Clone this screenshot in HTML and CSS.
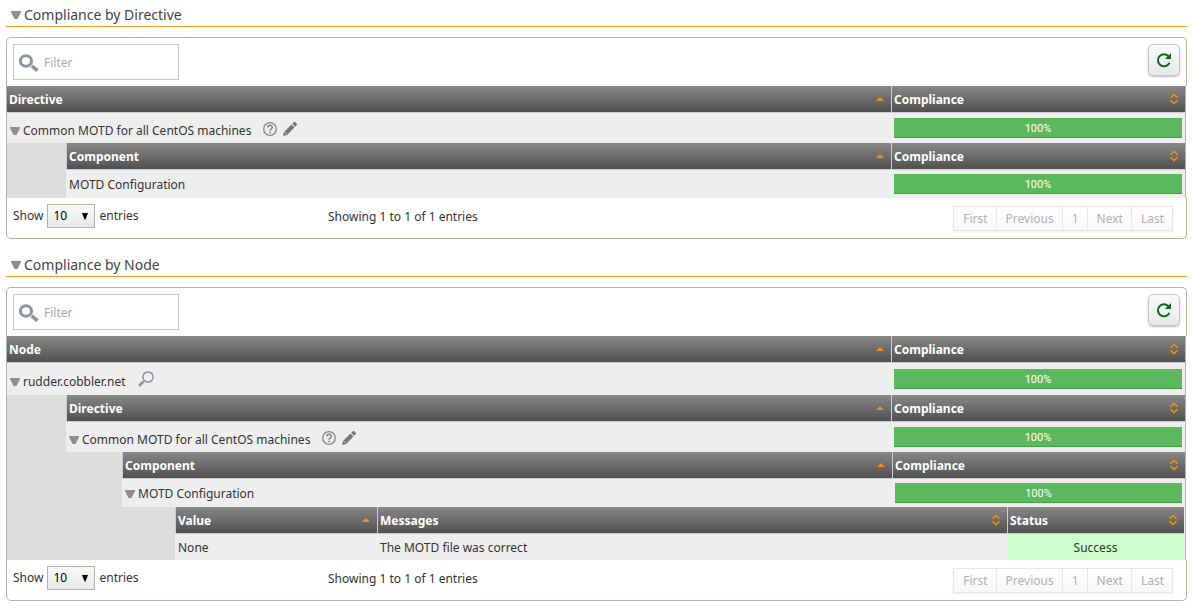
FILE: index.html
```html
<!DOCTYPE html>
<html lang="en">
<head>
<meta charset="utf-8">
<title>Compliance</title>
<link rel="stylesheet" href="styles.css">
</head>
<body>
<svg class="sprites" aria-hidden="true">
  <symbol id="tri" viewBox="0 0 10 8"><path d="M0 0h10v1L6.500 8h-3L0 1z" fill="#918d8d"/></symbol>
  <symbol id="asc" viewBox="0 0 8 12"><path d="M4 4l4 4H0z" fill="#ef9010"/></symbol>
  <symbol id="both" viewBox="0 0 8 12"><path d="M.5 4.700L4 1.500l3.500 3.200M.5 7.300L4 10.500l3.500-3.200" fill="none" stroke="#ef9010" stroke-width="1.600"/></symbol>
  <symbol id="down" viewBox="0 0 8 8"><path d="M1 1h6L4.500 7.500h-1z" fill="#000"/></symbol>
  <symbol id="glass" viewBox="0 0 20 18"><ellipse cx="7" cy="7" rx="5.6" ry="5.2" fill="none" stroke="#8d93a1" stroke-width="3"/><path d="M12.8 11.8l5.7 4.9" stroke="#8d93a1" stroke-width="3.6"/></symbol>
  <symbol id="lens" viewBox="0 0 16 16"><circle cx="10" cy="6" r="5.1" fill="none" stroke="#8d93a1" stroke-width="1.5"/><path d="M6 10l-1.500 1.500" stroke="#8d93a1" stroke-width="1.500"/><path d="M5 11l-4 4" stroke="#8d93a1" stroke-width="2.800"/></symbol>
  <symbol id="help" viewBox="0 0 14 14"><circle cx="7" cy="7" r="6.300" fill="none" stroke="#858585" stroke-width="1.300"/><path d="M4.800 5.400C4.800 2.700 9.300 2.700 9.300 5.300 9.300 6.900 7.100 6.900 7.100 8.700" fill="none" stroke="#858585" stroke-width="1.500"/><path d="M6.300 9.700h1.600v1.500H6.300z" fill="#858585"/></symbol>
  <symbol id="pencil" viewBox="0 0 14 14"><path d="M0 14l1-4 7.500-7.500 3 3L4 13zM9.300 1.700L11 0q1-.3 2 .8t.9 2.100l-1.700 1.800z" fill="#777"/><path d="M2 10.200l1.800 1.800" stroke="#eee" stroke-width=".7"/></symbol>
  <symbol id="reload" viewBox="0 0 16 16"><path d="M12.400 4.300A6 6 0 1 0 13.400 10.800" fill="none" stroke="#0b6b1b" stroke-width="2"/><path d="M15 1v6H9l2-2 2-2z" fill="#0b6b1b"/></symbol>
</svg>

<section class="section">
  <h2 class="title"><svg class="tri"><use href="#tri"/></svg>Compliance by Directive</h2>
  <div class="toolbar">
    <label class="filter"><svg class="glass"><use href="#glass"/></svg><input type="text" placeholder="Filter" aria-label="Filter directives"></label>
    <button class="refresh" aria-label="Refresh directives"><svg><use href="#reload"/></svg></button>
  </div>
  <div class="grid-body">
    <table class="grid top">
      <colgroup><col><col class="rate"></colgroup>
      <thead><tr>
        <th><button class="sort">Directive<svg><use href="#asc"/></svg></button></th>
        <th><button class="sort">Compliance<svg><use href="#both"/></svg></button></th>
      </tr></thead>
      <tbody>
        <tr class="row-directive">
          <td><div class="name"><svg class="tri"><use href="#tri"/></svg>Common MOTD for all CentOS machines<svg class="help"><use href="#help"/></svg><svg class="pencil"><use href="#pencil"/></svg></div></td>
          <td class="rate-cell"><div class="bar">100%</div></td>
        </tr>
        <tr><td colspan="2" class="nest">
          <table class="grid">
            <colgroup><col><col class="rate"></colgroup>
            <thead><tr>
              <th><button class="sort">Component<svg><use href="#asc"/></svg></button></th>
              <th><button class="sort">Compliance<svg><use href="#both"/></svg></button></th>
            </tr></thead>
            <tbody><tr class="row-component"><td>MOTD Configuration</td><td class="rate-cell"><div class="bar">100%</div></td></tr></tbody>
          </table>
        </td></tr>
      </tbody>
    </table>
  </div>
  <div class="footer">
    <label class="length">Show <span class="picker"><select><option>10</option><option>25</option><option>50</option></select><svg><use href="#down"/></svg></span> entries</label>
    <div class="info">Showing 1 to 1 of 1 entries</div>
    <div class="pager"><button>First</button><button>Previous</button><button>1</button><button>Next</button><button>Last</button></div>
  </div>
</section>

<section class="section">
  <h2 class="title"><svg class="tri"><use href="#tri"/></svg>Compliance by Node</h2>
  <div class="toolbar">
    <label class="filter"><svg class="glass"><use href="#glass"/></svg><input type="text" placeholder="Filter" aria-label="Filter nodes"></label>
    <button class="refresh" aria-label="Refresh nodes"><svg><use href="#reload"/></svg></button>
  </div>
  <div class="grid-body">
    <table class="grid top">
      <colgroup><col><col class="rate"></colgroup>
      <thead><tr>
        <th><button class="sort">Node<svg><use href="#asc"/></svg></button></th>
        <th><button class="sort">Compliance<svg><use href="#both"/></svg></button></th>
      </tr></thead>
      <tbody>
        <tr class="row-node">
          <td><div class="name"><svg class="tri"><use href="#tri"/></svg>rudder.cobbler.net<svg class="lens"><use href="#lens"/></svg></div></td>
          <td class="rate-cell"><div class="bar">100%</div></td>
        </tr>
        <tr><td colspan="2" class="nest">
          <table class="grid">
            <colgroup><col><col class="rate"></colgroup>
            <thead><tr>
              <th><button class="sort">Directive<svg><use href="#asc"/></svg></button></th>
              <th><button class="sort">Compliance<svg><use href="#both"/></svg></button></th>
            </tr></thead>
            <tbody>
              <tr class="row-directive">
                <td><div class="name"><svg class="tri"><use href="#tri"/></svg>Common MOTD for all CentOS machines<svg class="help"><use href="#help"/></svg><svg class="pencil"><use href="#pencil"/></svg></div></td>
                <td class="rate-cell"><div class="bar">100%</div></td>
              </tr>
              <tr><td colspan="2" class="nest nest-component">
                <table class="grid">
                  <colgroup><col><col class="rate-inner"></colgroup>
                  <thead><tr>
                    <th><button class="sort">Component<svg><use href="#asc"/></svg></button></th>
                    <th><button class="sort">Compliance<svg><use href="#both"/></svg></button></th>
                  </tr></thead>
                  <tbody>
                    <tr class="row-component">
                      <td><div class="name flat"><svg class="tri"><use href="#tri"/></svg>MOTD Configuration</div></td>
                      <td class="rate-cell"><div class="bar">100%</div></td>
                    </tr>
                    <tr><td colspan="2" class="nest nest-value">
                      <table class="grid">
                        <colgroup><col class="value"><col><col class="status"></colgroup>
                        <thead><tr>
                          <th><button class="sort">Value<svg><use href="#asc"/></svg></button></th>
                          <th><button class="sort">Messages<svg><use href="#both"/></svg></button></th>
                          <th><button class="sort">Status<svg><use href="#both"/></svg></button></th>
                        </tr></thead>
                        <tbody><tr class="row-value"><td>None</td><td class="message">The MOTD file was correct</td><td class="success">Success</td></tr></tbody>
                      </table>
                    </td></tr>
                  </tbody>
                </table>
              </td></tr>
            </tbody>
          </table>
        </td></tr>
      </tbody>
    </table>
  </div>
  <div class="footer">
    <label class="length">Show <span class="picker"><select><option>10</option><option>25</option><option>50</option></select><svg><use href="#down"/></svg></span> entries</label>
    <div class="info">Showing 1 to 1 of 1 entries</div>
    <div class="pager"><button>First</button><button>Previous</button><button>1</button><button>Next</button><button>Last</button></div>
  </div>
</section>
</body>
</html>
```

FILE: styles.css
```css
* { box-sizing: border-box; }

body {
  margin: 0;
  padding: 0 5px 0 6px;
  background: #fff;
  color: #333;
  font: 12px/16px "Noto Sans", "Open Sans", sans-serif;
}

button, input, select { font: inherit; color: inherit; }
svg { display: block; flex: none; }
.sprites { display: none; }

.section { margin-bottom: 11px; }

.title {
  display: flex;
  align-items: center;
  gap: 3px;
  height: 27px;
  margin: 0 0 10px;
  padding: 4px 0 0 5px;
  border-bottom: 1px solid #f59e1b;
  font-size: 14px;
  font-weight: 400;
  color: #444;
}

.tri { width: 10px; height: 8px; }

.toolbar {
  display: flex;
  justify-content: space-between;
  align-items: flex-start;
  padding: 6px 6px;
  border: 1px solid #b3b3a6;
  border-bottom: 0;
  border-radius: 5px 5px 0 0;
}

.filter {
  display: flex;
  align-items: center;
  gap: 5px;
  width: 166px;
  height: 36px;
  padding: 2px 0 0 5px;
  border: 1px solid #c8c8c8;
}
.filter input {
  width: 100%;
  min-width: 0;
  padding: 0;
  border: 0;
  outline: 0;
  background: none;
}
.filter input::placeholder { color: #aaa; opacity: 1; }
.glass { width: 20px; height: 18px; }

.refresh {
  display: grid;
  place-items: center;
  width: 32px;
  height: 32px;
  padding: 0;
  border: 1px solid #c8c8c8;
  border-radius: 5px;
  background: linear-gradient(#fafafa, #e8e8e8);
  box-shadow: 0 1px 2px #bbb;
}
.refresh svg { width: 16px; height: 16px; }

.grid-body {
  margin-right: 1px;
  border: solid #b3b3a6;
  border-width: 0 1px;
}

.grid {
  width: 100%;
  table-layout: fixed;
  border-collapse: separate;
  border-spacing: 0;
}
.rate { width: 294px; }
.rate-inner { width: 293px; }
.value { width: 202px; }
.status { width: 177px; }

.grid th {
  height: 27px;
  padding: 0;
  border-left: 1px solid #ccc;
  border-bottom: 1px solid #ccc;
  background: linear-gradient(#888, #505050);
}
.top > thead th:first-child { border-left: 0; }

.sort {
  display: flex;
  justify-content: space-between;
  align-items: center;
  width: 100%;
  height: 26px;
  padding: 2px 7px 0 2px;
  border: 0;
  background: none;
  color: #fff;
  font-weight: 700;
  text-align: left;
}
.sort svg { width: 8px; height: 12px; margin-bottom: 2px; }

.grid td { padding: 2px 3px 0; background: #eee; }
.grid .rate-cell { padding-top: 0; }
.grid .nest { padding: 0 0 0 59px; background: #ddd; }
.grid .nest-component { padding-left: 56px; }
.grid .nest-value {
  padding: 0 1px 0 53px;
  background: linear-gradient(#eee, #eee) right / 1px 100% no-repeat #ddd;
}

.row-node { height: 32px; }
.row-directive { height: 30px; }
.row-component { height: 28px; }
.row-value { height: 26px; }

.name {
  display: flex;
  align-items: center;
  gap: 3px;
  padding-top: 4px;
}
.flat { padding-top: 0; }
.help { width: 14px; height: 14px; margin: 0 3px 4px 9px; }
.pencil { width: 14px; height: 14px; margin-bottom: 4px; }
.lens { width: 16px; height: 16px; margin: 0 0 6px 9px; }

.bar {
  height: 20px;
  border-bottom: 1px solid #449d48;
  background: #5cb85c;
  color: #fff;
  font: 11px/21px Roboto, sans-serif;
  text-align: center;
}
.grid .success { background: #cfc; text-align: center; }

.footer {
  display: grid;
  grid-template-columns: 315px 1fr auto;
  align-items: start;
  height: 41px;
  padding: 6px 13px 0 6px;
  border: 1px solid #b3b3a6;
  border-top: 0;
  border-radius: 0 0 5px 5px;
}
.length { display: flex; align-items: center; gap: 4px; line-height: 26px; height: 24px; }
.picker { display: grid; align-items: center; }
.picker > * { grid-area: 1 / 1; }
.picker svg {
  justify-self: end;
  width: 8px;
  height: 8px;
  margin-right: 6px;
  pointer-events: none;
}
.picker select {
  appearance: none;
  width: 48px;
  height: 24px;
  padding: 0 0 0 5px;
  border: 1px solid #b3b3a6;
  border-radius: 0;
  background: linear-gradient(#fafafa, #e8e8e8);
  color: #000;
  line-height: 22px;
}
.info { line-height: 26px; }

.pager {
  display: flex;
  margin-top: 2px;
  border: 1px solid #e6e6e6;
  box-shadow: 0 1px 2px #eee;
}
.pager button {
  height: 23px;
  padding: 0 8px 0 9px;
  border: 0;
  background: linear-gradient(#fff, #f7f7f7);
  color: #b0b0b0;
}
.pager button + button { border-left: 1px solid #e6e6e6; }
```
